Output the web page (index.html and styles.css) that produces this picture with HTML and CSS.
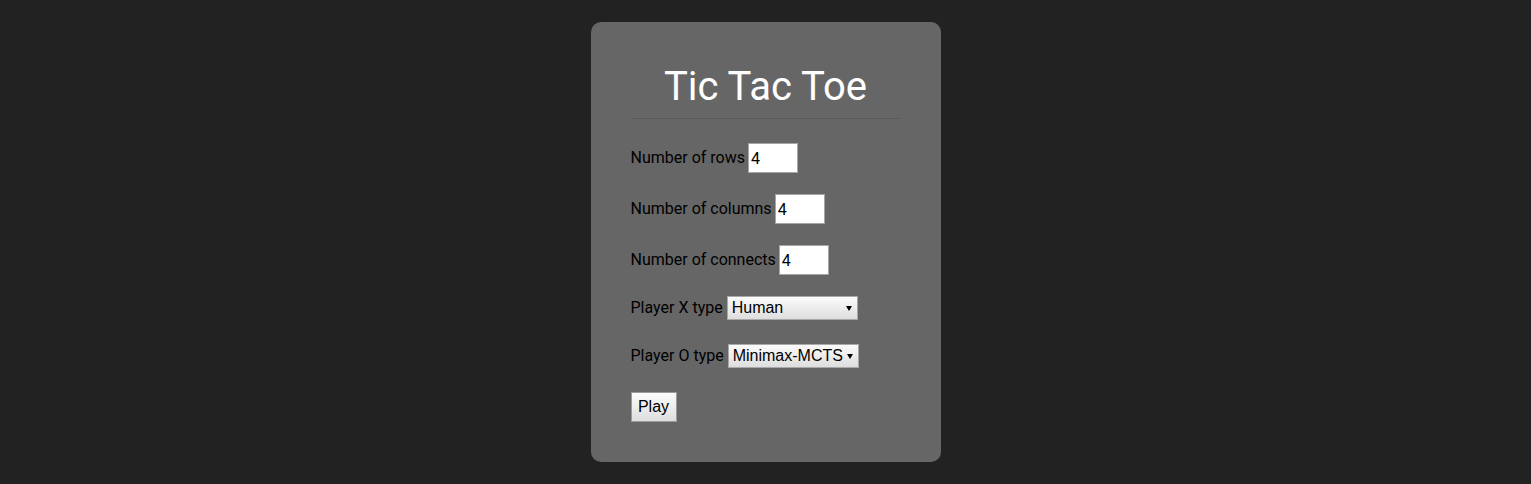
FILE: index.html
```html
<!DOCTYPE html>
<html lang="en">
<head>
<meta charset="utf-8">
<title>Tic Tac Toe</title>
<link rel="stylesheet" href="styles.css">
</head>
<body>
<main class="card">
  <h1 class="title">Tic Tac Toe</h1>
  <hr class="divider">
  <form class="form">
    <div class="row row-input">
      <label class="label" for="rows">Number of rows</label>
      <input class="num" id="rows" type="text" value="4">
    </div>
    <div class="row row-input">
      <label class="label" for="cols">Number of columns</label>
      <input class="num" id="cols" type="text" value="4">
    </div>
    <div class="row row-input">
      <label class="label" for="conn">Number of connects</label>
      <input class="num" id="conn" type="text" value="4">
    </div>
    <div class="row row-select">
      <label class="label" for="px">Player X type</label>
      <span class="select-wrap">
        <select class="select" id="px">
          <option>Human</option>
          <option>Minimax-MCTS</option>
        </select>
      </span>
    </div>
    <div class="row row-select">
      <label class="label" for="po">Player O type</label>
      <span class="select-wrap">
        <select class="select" id="po">
          <option>Minimax-MCTS</option>
          <option>Human</option>
        </select>
      </span>
    </div>
    <div class="row row-button">
      <button class="play" type="button">Play</button>
    </div>
  </form>
</main>
</body>
</html>
```
FILE: styles.css
```css
html, body {
  margin: 0;
  padding: 0;
  background: #222222;
  height: 100%;
}
body {
  padding-top: 22px;
  box-sizing: border-box;
  font-family: Roboto, "Liberation Sans", Arial, sans-serif;
}
.card {
  width: 350px;
  box-sizing: border-box;
  margin: 0 auto;
  background: #666666;
  border-radius: 10px;
  padding: 41px 40px 40px 40px;
}
.title {
  margin: 0;
  font-family: Roboto, sans-serif;
  font-weight: 400;
  font-size: 40px;
  line-height: 47px;
  color: #ffffff;
  text-align: center;
}
.divider {
  margin: 8px 0 0 0;
  border: 0;
  border-top: 1px solid #5b5b5b;
  height: 0;
}
.form {
  margin: 24px 0 0 0;
  display: flex;
  flex-direction: column;
  gap: 21px;
}
.row {
  display: flex;
  align-items: flex-start;
  gap: 3px;
}
.row-input { height: 30px; }
.row-input .label { padding-top: 5px; }
.row-select { height: 24px; margin-bottom: 3px; gap: 4px; }
.row-select .label { padding-top: 2px; }
.row-button { height: 30px; }
.label {
  font-size: 16px;
  color: #000000;
  line-height: 19px;
}
.num {
  width: 50px;
  height: 30px;
  box-sizing: border-box;
  margin: 0;
  padding: 0 2px;
  border: 1px solid #a6a6a6;
  background: #ffffff;
  font-family: Roboto, sans-serif;
  font-size: 16px;
  color: #000000;
  outline: none;
}
.select-wrap {
  position: relative;
  display: inline-block;
  height: 24px;
}
.select-wrap::after {
  content: "";
  position: absolute;
  right: 6px;
  top: 10px;
  width: 0;
  height: 0;
  border-left: 3px solid transparent;
  border-right: 3px solid transparent;
  border-top: 5px solid #000000;
  pointer-events: none;
}
.select {
  -webkit-appearance: none;
  appearance: none;
  width: 131px;
  height: 24px;
  box-sizing: border-box;
  margin: 0;
  padding: 0 14px 0 4px;
  border: 1px solid #a9a9a9;
  border-radius: 0;
  background: linear-gradient(#fbfbfb, #dedede);
  font-family: "Liberation Sans", Arial, sans-serif;
  font-size: 16px;
  color: #000000;
  line-height: 22px;
}
.play {
  height: 30px;
  width: 46px;
  box-sizing: border-box;
  margin: 0;
  padding: 0;
  border: 1px solid #9a9a9a;
  border-radius: 0;
  background: linear-gradient(#fbfbfb, #dedede);
  font-family: "Liberation Sans", Arial, sans-serif;
  font-size: 16px;
  color: #000000;
}
```
